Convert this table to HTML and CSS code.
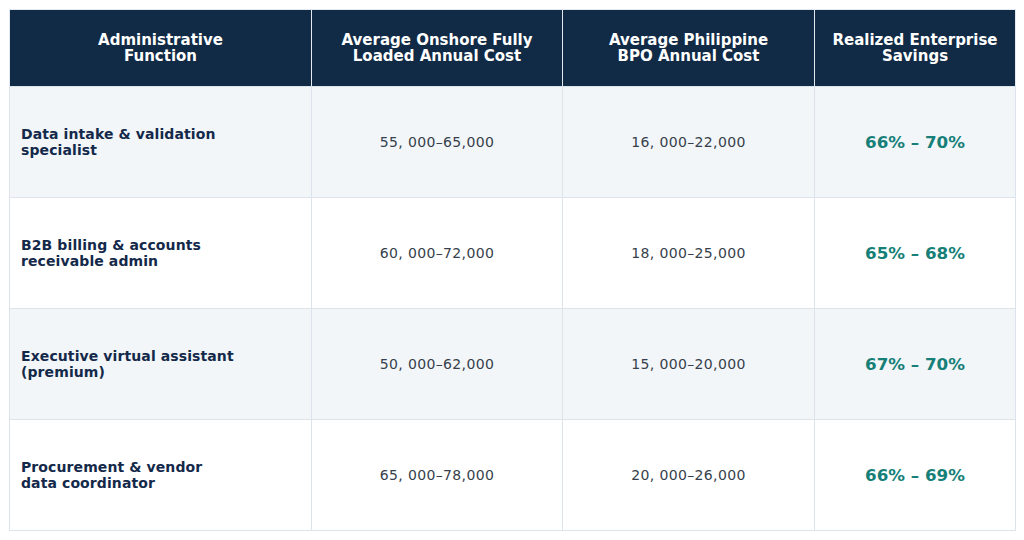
FILE: index.html
```html
<!DOCTYPE html>
<html lang="en">
<head>
<meta charset="utf-8">
<title>Cost comparison</title>
<link rel="stylesheet" href="styles.css">
</head>
<body>
<div class="wrap">
<table class="cost">
<colgroup>
<col class="c1"><col class="c2"><col class="c3"><col class="c4">
</colgroup>
<thead>
<tr>
<th>Administrative<br>Function</th>
<th>Average Onshore Fully<br>Loaded Annual Cost</th>
<th>Average Philippine<br>BPO Annual Cost</th>
<th>Realized Enterprise<br>Savings</th>
</tr>
</thead>
<tbody>
<tr class="alt">
<td class="fn"><span>Data intake &amp; validation specialist</span></td>
<td class="num">55, 000–65,000</td>
<td class="num">16, 000–22,000</td>
<td class="save">66% – 70%</td>
</tr>
<tr>
<td class="fn"><span>B2B billing &amp; accounts receivable admin</span></td>
<td class="num">60, 000–72,000</td>
<td class="num">18, 000–25,000</td>
<td class="save">65% – 68%</td>
</tr>
<tr class="alt">
<td class="fn"><span>Executive virtual assistant (premium)</span></td>
<td class="num">50, 000–62,000</td>
<td class="num">15, 000–20,000</td>
<td class="save">67% – 70%</td>
</tr>
<tr>
<td class="fn"><span>Procurement &amp; vendor data coordinator</span></td>
<td class="num">65, 000–78,000</td>
<td class="num">20, 000–26,000</td>
<td class="save">66% – 69%</td>
</tr>
</tbody>
</table>
</div>
</body>
</html>
```

FILE: styles.css
```css
html, body {
  margin: 0;
  padding: 0;
  background: #ffffff;
}
body {
  font-family: "DejaVu Sans", Verdana, sans-serif;
}
.wrap {
  padding: 9px;
}
.cost {
  width: 1006px;
  border-collapse: collapse;
  table-layout: fixed;
}
.c1 { width: 302px; }
.c2 { width: 251px; }
.c3 { width: 252px; }
.c4 { width: 201px; }

.cost th {
  background: #112a45;
  color: #ffffff;
  font-size: 15px;
  font-weight: bold;
  line-height: 16px;
  text-align: center;
  height: 76px;
  padding: 0 6px;
  border: 1px solid #e4e9ef;
  border-bottom-color: #dde3ea;
}
.cost td {
  height: 110px;
  padding: 0 11px;
  border: 1px solid #dde3ea;
  font-size: 14px;
  line-height: 16px;
  vertical-align: middle;
}
.cost tr.alt td {
  background: #f2f6f9;
}
.fn {
  color: #14294a;
  font-weight: bold;
  text-align: left;
  letter-spacing: 0.1px;
}
.fn span {
  display: block;
  max-width: 220px;
}
.num {
  color: #363f4b;
  text-align: center;
  letter-spacing: 0.35px;
}
.cost td.save {
  color: #167f78;
  font-weight: bold;
  font-size: 16.7px;
  text-align: center;
}
```
